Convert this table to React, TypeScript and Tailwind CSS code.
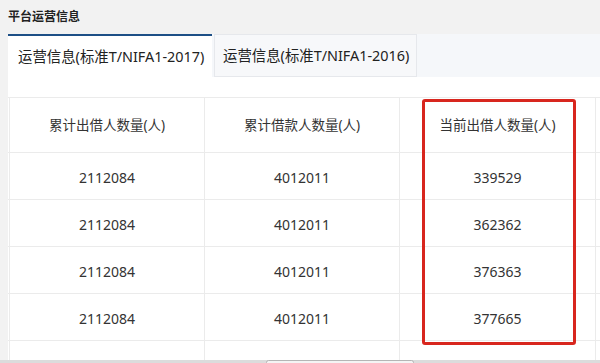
const rows = [
  ["2112084", "4012011", "339529"],
  ["2112084", "4012011", "362362"],
  ["2112084", "4012011", "376363"],
  ["2112084", "4012011", "377665"],
];

const headers = ["累计出借人数量(人)", "累计借款人数量(人)", "当前出借人数量(人)"];

function Row({ cells, tall, head }: { cells: string[]; tall?: boolean; head?: boolean }) {
  return (
    <div
      className={`grid grid-cols-[2px_195px_195px_196px_1fr] border-b border-[#ebebeb] ${
        tall ? "h-[56px]" : "h-[47px]"
      } ${head ? "border-t" : ""}`}
    >
      <div className="border-r border-[#ebebeb]" />
      {cells.map((c, i) => (
        <div
          key={i}
          className={`flex items-center justify-center border-r border-[#ebebeb] text-[#333] ${
            head ? "text-[13.5px]" : "text-[14px] pt-[2px]"
          }`}
        >
          {c}
        </div>
      ))}
      <div />
    </div>
  );
}

export default function App() {
  return (
    <div
      className="w-[600px] h-[363px] overflow-hidden bg-[#f2f2f2] flex flex-col"
      style={{ fontFamily: '"Noto Sans", "Noto Sans CJK SC", sans-serif' }}
    >
      {/* Title */}
      <div className="h-[34px] pl-2 pt-[9px] text-[12px] font-bold text-[#222] leading-[16px]">
        平台运营信息
      </div>

      {/* Tabs */}
      <div className="ml-2 h-[43px] flex bg-[#f5f7fa]">
        <div className="w-[204px] bg-white border-t-2 border-[#1d4f86] flex items-center pl-[10px] text-[14.4px] text-[#222]">
          运营信息(标准T/NIFA1-2017)
        </div>
        <div className="ml-[2px] w-[203px] bg-[#f7f8fa] border border-[#e6e8ec] flex items-center pl-[8px] text-[14.4px] text-[#222]">
          运营信息(标准T/NIFA1-2016)
        </div>
      </div>

      {/* Table panel */}
      <div className="ml-2 flex-1 bg-white pt-[20px] relative overflow-hidden">
        <Row cells={headers} tall head />
        {rows.map((r, i) => (
          <Row key={i} cells={r} />
        ))}
        <div className="grid grid-cols-[2px_195px_195px_196px_1fr] h-[30px]">
          <div className="border-r border-[#ebebeb]" />
          <div className="border-r border-[#ebebeb]" />
          <div className="border-r border-[#ebebeb]" />
          <div className="border-r border-[#ebebeb]" />
          <div />
        </div>

        {/* red highlight */}
        <div className="absolute left-[414px] top-[22px] w-[154px] h-[246px] border-[3px] border-[#d8261e] rounded-[3px]" />
      </div>

      {/* scrollbar */}
      <div className="h-[3px] bg-[#dcdcdc] flex">
        <div className="w-[266px]" />
        <div className="w-[148px] h-[5px] bg-[#f4f4f4] border border-[#b5b5b5] rounded-[3px]" />
      </div>
    </div>
  );
}
